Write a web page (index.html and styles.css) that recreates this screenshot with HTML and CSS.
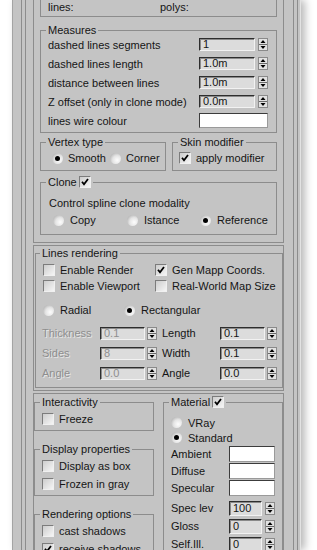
FILE: index.html
```html
<!DOCTYPE html>
<html lang="en">
<head>
    <meta charset="UTF-8">
    <meta name="viewport" content="width=device-width, initial-scale=1.0">
    <title>Spline tools - Parameters</title>
    <link rel="stylesheet" href="styles.css">
</head>
<body>

    <!-- shared glyphs -->
    <svg class="defs" xmlns="http://www.w3.org/2000/svg">
        <symbol id="spin" viewBox="0 0 10 13">
            <rect x="0.5" y="0.5" width="9" height="12" fill="#e2e2e2" stroke="#8a8a8a"/>
            <line x1="1" y1="6.5" x2="9" y2="6.5" stroke="#6a6a6a"/>
            <path d="M5 2 L7.5 5 L2.5 5 Z" fill="#000"/>
            <path d="M2.5 8 L7.5 8 L5 11 Z" fill="#000"/>
        </symbol>
        <symbol id="tick" viewBox="0 0 8 8">
            <path d="M1 3.8 L3 6.3 L7 1" fill="none" stroke="#000" stroke-width="1.8"/>
        </symbol>
    </svg>

    <div class="panel">
        <div class="rollout">
            <div class="rollout-inner">

                <!-- Parameters rollout -->
                <div class="section section-params">
                    <div class="stats">
                        <span class="stat-lines">lines:</span>
                        <span>polys:</span>
                    </div>

                    <fieldset class="group measures">
                        <legend>Measures</legend>
                        <div class="measure-rows">
                            <div class="measure-row">
                                <span>dashed lines segments</span>
                                <div class="spinner-field"><span class="field">1</span><svg class="spin"><use href="#spin"/></svg></div>
                            </div>
                            <div class="measure-row">
                                <span>dashed lines length</span>
                                <div class="spinner-field"><span class="field">1.0m</span><svg class="spin"><use href="#spin"/></svg></div>
                            </div>
                            <div class="measure-row">
                                <span>distance between lines</span>
                                <div class="spinner-field"><span class="field">1.0m</span><svg class="spin"><use href="#spin"/></svg></div>
                            </div>
                            <div class="measure-row">
                                <span>Z offset (only in clone mode)</span>
                                <div class="spinner-field"><span class="field">0.0m</span><svg class="spin"><use href="#spin"/></svg></div>
                            </div>
                            <div class="measure-row">
                                <span>lines wire colour</span>
                                <span class="swatch swatch-wide"></span>
                            </div>
                        </div>
                    </fieldset>

                    <div class="pair">
                        <fieldset class="group vertex">
                            <legend>Vertex type</legend>
                            <div class="vertex-row">
                                <label class="option"><span class="radio on"></span>Smooth</label>
                                <label class="option"><span class="radio"></span>Corner</label>
                            </div>
                        </fieldset>
                        <fieldset class="group skin">
                            <legend>Skin modifier</legend>
                            <div class="skin-row">
                                <label class="option"><span class="check"><svg><use href="#tick"/></svg></span>apply modifier</label>
                            </div>
                        </fieldset>
                    </div>

                    <fieldset class="group clone">
                        <legend class="legend-check">Clone <span class="check"><svg><use href="#tick"/></svg></span></legend>
                        <p class="clone-text">Control spline clone modality</p>
                        <div class="clone-row">
                            <label class="option"><span class="radio"></span>Copy</label>
                            <label class="option"><span class="radio"></span>Istance</label>
                            <label class="option"><span class="radio on"></span>Reference</label>
                        </div>
                    </fieldset>
                </div>

                <!-- Rendering rollout -->
                <div class="section section-render">
                    <fieldset class="group lines-rendering">
                        <legend>Lines rendering</legend>
                        <div class="render-checks">
                            <label class="option"><span class="check"></span>Enable Render</label>
                            <label class="option"><span class="check"><svg><use href="#tick"/></svg></span>Gen Mapp Coords.</label>
                            <label class="option"><span class="check"></span>Enable Viewport</label>
                            <label class="option"><span class="check"></span>Real-World Map Size</label>
                        </div>
                        <div class="render-radios">
                            <label class="option option-wide"><span class="radio"></span>Radial</label>
                            <label class="option option-wide"><span class="radio on"></span>Rectangular</label>
                        </div>
                        <div class="render-spins">
                            <div class="spin-row disabled">
                                <span class="spin-label">Thickness</span>
                                <span class="field field-small">0.1</span><svg class="spin"><use href="#spin"/></svg>
                            </div>
                            <div class="spin-row">
                                <span class="spin-label">Length</span>
                                <span class="field field-small">0.1</span><svg class="spin"><use href="#spin"/></svg>
                            </div>
                            <div class="spin-row disabled">
                                <span class="spin-label">Sides</span>
                                <span class="field field-small">8</span><svg class="spin"><use href="#spin"/></svg>
                            </div>
                            <div class="spin-row">
                                <span class="spin-label">Width</span>
                                <span class="field field-small">0.1</span><svg class="spin"><use href="#spin"/></svg>
                            </div>
                            <div class="spin-row disabled">
                                <span class="spin-label">Angle</span>
                                <span class="field field-small">0.0</span><svg class="spin"><use href="#spin"/></svg>
                            </div>
                            <div class="spin-row">
                                <span class="spin-label">Angle</span>
                                <span class="field field-small">0.0</span><svg class="spin"><use href="#spin"/></svg>
                            </div>
                        </div>
                    </fieldset>
                </div>

                <!-- Object properties rollout -->
                <div class="section section-split">
                    <div class="column">
                        <fieldset class="group small-group">
                            <legend>Interactivity</legend>
                            <div class="check-list">
                                <label class="option"><span class="check"></span>Freeze</label>
                            </div>
                        </fieldset>
                        <fieldset class="group small-group spaced">
                            <legend>Display properties</legend>
                            <div class="check-list">
                                <label class="option"><span class="check"></span>Display as box</label>
                                <label class="option"><span class="check"></span>Frozen in gray</label>
                            </div>
                        </fieldset>
                        <fieldset class="group small-group spaced">
                            <legend>Rendering options</legend>
                            <div class="check-list">
                                <label class="option"><span class="check"></span>cast shadows</label>
                                <label class="option"><span class="check"><svg><use href="#tick"/></svg></span>receive shadows</label>
                            </div>
                        </fieldset>
                    </div>

                    <fieldset class="group material">
                        <legend class="legend-check">Material <span class="check"><svg><use href="#tick"/></svg></span></legend>
                        <div class="material-radios">
                            <label class="option"><span class="radio"></span>VRay</label>
                            <label class="option"><span class="radio on"></span>Standard</label>
                        </div>
                        <div class="material-colours">
                            <div class="material-row"><span>Ambient</span><span class="swatch"></span></div>
                            <div class="material-row"><span>Diffuse</span><span class="swatch"></span></div>
                            <div class="material-row"><span>Specular</span><span class="swatch"></span></div>
                        </div>
                        <div class="material-spins">
                            <div class="material-row">
                                <span>Spec lev</span>
                                <div class="spinner-field"><span class="field field-tiny">100</span><svg class="spin"><use href="#spin"/></svg></div>
                            </div>
                            <div class="material-row">
                                <span>Gloss</span>
                                <div class="spinner-field"><span class="field field-tiny">0</span><svg class="spin"><use href="#spin"/></svg></div>
                            </div>
                            <div class="material-row">
                                <span>Self.Ill.</span>
                                <div class="spinner-field"><span class="field field-tiny">0</span><svg class="spin"><use href="#spin"/></svg></div>
                            </div>
                        </div>
                    </fieldset>
                </div>

            </div>
        </div>
    </div>

</body>
</html>
```

FILE: styles.css
```css
body {
    margin: 0;
    height: 550px;
    overflow: hidden;
    background: #fff;
    font-family: "Liberation Sans", Arial, sans-serif;
    font-size: 11px;
    color: #151515;
}

.defs {
    display: none;
}

/* Outer command panel */
.panel {
    box-sizing: border-box;
    width: 289px;
    height: 550px;
    margin-left: 12px;
    display: flex;
    background: #c4c4c4;
    border-left: 1px solid #a4a4a4;
    border-right: 1px solid #e2e2e2;
    box-shadow: 4px 0 8px rgba(0, 0, 0, 0.28);
    overflow: hidden;
}

.rollout {
    flex: 1;
    display: flex;
    margin: 0 2px 0 8px;
    border-left: 1px solid #8c8c8c;
    border-right: 1px solid #8c8c8c;
}

.rollout-inner {
    flex: 1;
    display: flex;
    flex-direction: column;
    margin: 0 3px;
    border-left: 1px solid #8c8c8c;
    border-right: 1px solid #8c8c8c;
}

.section {
    margin: 2px 9px 0 7px;
    border: 1px solid #8c8c8c;
    flex: none;
}

/* Group boxes */
.group {
    margin: 0;
    padding: 0 7px;
    border: 1px solid #8c8c8c;
    min-width: 0;
}

.group legend {
    padding: 0 2px;
    margin-left: -2px;
    height: 12px;
    line-height: 12px;
}

.legend-check {
    display: flex;
    align-items: center;
    gap: 2px;
}

.option {
    display: flex;
    align-items: center;
    gap: 5px;
    white-space: nowrap;
}

.option-wide {
    gap: 6px;
}

.check {
    box-sizing: border-box;
    flex: none;
    width: 12px;
    height: 12px;
    display: flex;
    align-items: center;
    justify-content: center;
    border: 1px solid;
    border-color: #7c7c7c #f0f0f0 #f0f0f0 #7c7c7c;
    background: linear-gradient(135deg, #cdcdcd 0%, #f5f5f5 100%);
}

.check svg {
    width: 8px;
    height: 8px;
}

.radio {
    flex: none;
    width: 11px;
    height: 11px;
    border-radius: 50%;
    display: flex;
    align-items: center;
    justify-content: center;
    background: radial-gradient(circle at 65% 65%, #fdfdfd 0%, #e4e4e4 45%, #9c9c9c 100%);
}

.radio.on::after {
    content: "";
    width: 5px;
    height: 5px;
    border-radius: 50%;
    background: #000;
}

.field {
    box-sizing: border-box;
    display: block;
    width: 56px;
    height: 13px;
    padding-left: 3px;
    line-height: 11px;
    border: 1px solid;
    border-color: #2e2e2e #f2f2f2 #f2f2f2 #2e2e2e;
    box-shadow: inset 1px 1px 0 #8a8a8a;
    background: #dcdcdc;
}

.field-small {
    width: 45px;
}

.field-tiny {
    width: 33px;
    height: 15px;
    line-height: 13px;
}

.spin {
    flex: none;
    width: 10px;
    height: 13px;
}

.spinner-field {
    display: flex;
    align-items: center;
    gap: 3px;
}

.swatch {
    box-sizing: border-box;
    display: block;
    width: 46px;
    height: 16px;
    background: #fff;
    border: 1px solid;
    border-color: #3c3c3c #9a9a9a #9a9a9a #3c3c3c;
}

.swatch-wide {
    width: 69px;
    height: 15px;
}

/* Parameters rollout */
.section-params {
    margin-top: -30px;
    padding: 0 6px 7px;
}

.stats {
    box-sizing: border-box;
    height: 46px;
    display: flex;
    align-items: flex-end;
    padding: 0 7px 2px;
    line-height: 13px;
    border: 1px solid #8c8c8c;
}

.stat-lines {
    width: 112px;
}

.measures {
    margin-top: 7px;
    padding-right: 8px;
    padding-bottom: 2px;
}

.measure-rows {
    display: grid;
    grid-auto-rows: 19px;
    margin-top: -1px;
}

.measure-row {
    display: flex;
    align-items: center;
    justify-content: space-between;
}

.pair {
    display: grid;
    grid-template-columns: 126px 1fr;
    column-gap: 6px;
    margin-top: 3px;
}

.vertex-row {
    display: grid;
    grid-template-columns: 58px auto;
    height: 18px;
    align-items: center;
    padding: 1px 0 3px 4px;
}

.skin-row {
    height: 18px;
    display: flex;
    align-items: center;
    padding: 1px 0 3px 0;
    margin-left: -1px;
}

.clone {
    margin-top: 5px;
    padding-bottom: 6px;
}

.clone-text {
    margin: 8px 0 0 1px;
    line-height: 14px;
}

.clone-row {
    display: grid;
    grid-template-columns: 74px 73px auto;
    height: 16px;
    align-items: center;
    margin: 2px 0 0 5px;
}

.clone-row .option {
    gap: 6px;
}

/* Rendering rollout */
.section-render {
    padding: 1px 0 2px 1px;
}

.lines-rendering {
    padding: 0 0 4px 6px;
}

.render-checks {
    display: grid;
    grid-template-columns: 112px 1fr;
    grid-auto-rows: 16px;
    align-items: center;
    margin: 3px 0 0 1px;
}

.render-radios {
    display: grid;
    grid-template-columns: 81px 1fr;
    height: 16px;
    align-items: center;
    margin: 8px 0 0 1px;
}

.render-spins {
    display: grid;
    grid-template-columns: 115px 116px;
    grid-auto-rows: 20px;
    column-gap: 5px;
    margin-top: 5px;
}

.spin-row {
    display: flex;
    align-items: center;
    gap: 2px;
}

.spin-label {
    width: 56px;
}

.disabled .spin-label {
    color: #8e8e8e;
    text-shadow: 1px 1px 0 #e6e6e6;
}

.disabled .field {
    color: #8e8e8e;
}

/* Object properties rollout */
.section-split {
    display: grid;
    grid-template-columns: 120px 120px;
    column-gap: 9px;
    align-items: start;
    padding-top: 2px;
    height: 200px;
}

.column {
    display: flex;
    flex-direction: column;
}

.small-group {
    padding-bottom: 3px;
}

.spaced {
    margin-top: 12px;
}

.check-list {
    display: grid;
    grid-auto-rows: 16px;
    row-gap: 2px;
    align-items: center;
    margin-top: 3px;
}

.material {
    padding: 0 7px;
}

.material-radios {
    display: grid;
    grid-auto-rows: 15px;
    align-items: center;
    margin-top: 7px;
}

.material-radios .option {
    gap: 6px;
}

.material-colours {
    display: grid;
    grid-auto-rows: 17px;
}

.material-row {
    display: flex;
    align-items: center;
    justify-content: space-between;
}

.material-spins {
    display: grid;
    grid-auto-rows: 18px;
    margin-top: 3px;
}
```
